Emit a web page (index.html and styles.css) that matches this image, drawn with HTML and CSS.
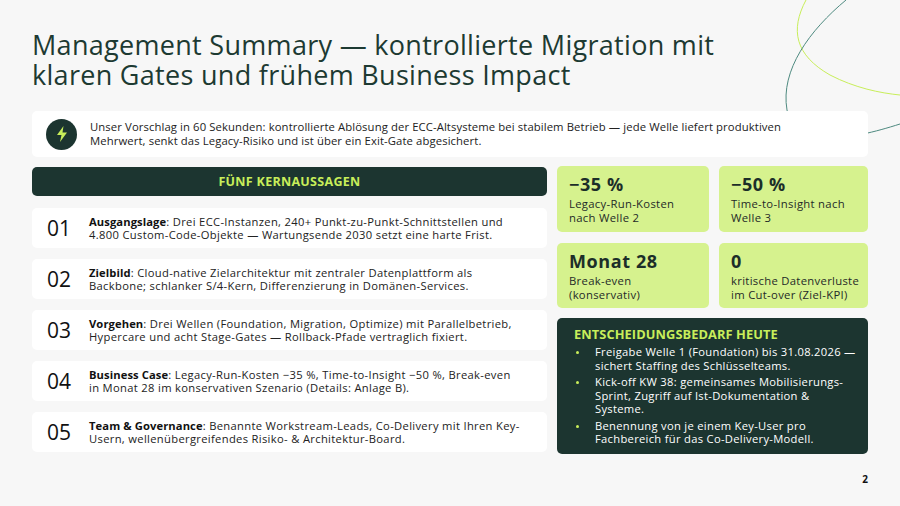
FILE: index.html
```html
<!DOCTYPE html>
<html lang="de">
<head>
<meta charset="utf-8">
<title>Management Summary</title>
<link rel="stylesheet" href="styles.css">
</head>
<body>
<div class="slide">
  <svg class="deco" width="900" height="506" viewBox="0 0 900 506">
    <path d="M806 0 C 790 30, 795 55, 830 75 C 855 88, 880 93, 900 95" fill="none" stroke="#c8ee5a" stroke-width="1"/>
    <path d="M846 0 C 810 30, 780 70, 787 110 C 795 150, 850 140, 900 124" fill="none" stroke="#4e8a80" stroke-width="1"/>
  </svg>
  <h1 class="title">Management Summary — kontrollierte Migration mit klaren Gates und frühem Business Impact</h1>
  <div class="intro">
    <div class="bolt">
      <svg width="14" height="16" viewBox="0 0 14 16"><path d="M8.5 0 L2 9 H6.5 L5 16 L12 6.5 H7.5 Z" fill="#c8ee5a"/></svg>
    </div>
    <p>Unser Vorschlag in 60 Sekunden: kontrollierte Ablösung der ECC-Altsysteme bei stabilem Betrieb — jede Welle liefert produktiven<br>Mehrwert, senkt das Legacy-Risiko und ist über ein Exit-Gate abgesichert.</p>
  </div>
  <div class="main">
    <div class="left">
      <div class="bar">FÜNF KERNAUSSAGEN</div>
      <div class="row"><span class="num">01</span><p><b>Ausgangslage</b>: Drei ECC-Instanzen, 240+ Punkt-zu-Punkt-Schnittstellen und<br>4.800 Custom-Code-Objekte — Wartungsende 2030 setzt eine harte Frist.</p></div>
      <div class="row"><span class="num">02</span><p><b>Zielbild</b>: Cloud-native Zielarchitektur mit zentraler Datenplattform als<br>Backbone; schlanker S/4-Kern, Differenzierung in Domänen-Services.</p></div>
      <div class="row"><span class="num">03</span><p><b>Vorgehen</b>: Drei Wellen (Foundation, Migration, Optimize) mit Parallelbetrieb,<br>Hypercare und acht Stage-Gates — Rollback-Pfade vertraglich fixiert.</p></div>
      <div class="row"><span class="num">04</span><p><b>Business Case</b>: Legacy-Run-Kosten −35 %, Time-to-Insight −50 %, Break-even<br>in Monat 28 im konservativen Szenario (Details: Anlage B).</p></div>
      <div class="row"><span class="num">05</span><p><b>Team &amp; Governance</b>: Benannte Workstream-Leads, Co-Delivery mit Ihren Key-<br>Usern, wellenübergreifendes Risiko- &amp; Architektur-Board.</p></div>
    </div>
    <div class="right">
      <div class="kpis">
        <div class="kpi"><div class="val">−35 %</div><div class="lbl">Legacy-Run-Kosten<br>nach Welle 2</div></div>
        <div class="kpi"><div class="val">−50 %</div><div class="lbl">Time-to-Insight nach<br>Welle 3</div></div>
        <div class="kpi"><div class="val">Monat 28</div><div class="lbl">Break-even<br>(konservativ)</div></div>
        <div class="kpi"><div class="val">0</div><div class="lbl">kritische Datenverluste<br>im Cut-over (Ziel-KPI)</div></div>
      </div>
      <div class="decision">
        <h2>ENTSCHEIDUNGSBEDARF HEUTE</h2>
        <ul>
          <li>Freigabe Welle 1 (Foundation) bis 31.08.2026 —<br>sichert Staffing des Schlüsselteams.</li>
          <li>Kick-off KW 38: gemeinsames Mobilisierungs-<br>Sprint, Zugriff auf Ist-Dokumentation &amp;<br>Systeme.</li>
          <li>Benennung von je einem Key-User pro<br>Fachbereich für das Co-Delivery-Modell.</li>
        </ul>
      </div>
    </div>
  </div>
  <div class="pagenum">2</div>
</div>
</body>
</html>
```

FILE: styles.css
```css
* { box-sizing: border-box; }
html, body { margin: 0; padding: 0; }
body {
  background: #f7f7f7;
  font-family: "Open Sans", "Noto Sans", sans-serif;
  color: #1f2a28;
}
.slide {
  position: relative;
  width: 900px;
  height: 506px;
  padding: 30px 32px 0 32px;
  overflow: hidden;
}
.deco { position: absolute; left: 0; top: 0; z-index: 0; }
.title {
  position: relative;
  margin: 0;
  max-width: 740px;
  font-weight: 400;
  font-size: 27px;
  line-height: 30px;
  color: #1d3a32;
  letter-spacing: 0.3px;
}
.intro {
  position: relative;
  z-index: 1;
  margin-top: 21px;
  height: 46px;
  background: #ffffff;
  border-radius: 5px;
  display: flex;
  align-items: center;
  padding: 0 14px;
  gap: 13px;
}
.bolt {
  width: 31px; height: 31px;
  border-radius: 50%;
  background: #1c3530;
  display: flex; align-items: center; justify-content: center;
  flex: none;
}
.intro p { margin: 0; font-size: 11.3px; line-height: 14px; color: #222; letter-spacing: 0.1px; white-space: nowrap; }
.main {
  display: flex;
  gap: 10px;
  margin-top: 10px;
}
.left { width: 515px; display: flex; flex-direction: column; gap: 11px; }
.bar {
  height: 29px;
  background: #1c3530;
  border-radius: 5px;
  color: #c8ee5a;
  font-weight: 700;
  font-size: 12.5px;
  display: flex; align-items: center; justify-content: center;
  letter-spacing: 0.3px;
  margin-bottom: 1px;
}
.row {
  height: 40px;
  background: #fff;
  border-radius: 5px;
  display: flex;
  align-items: center;
  padding: 0 10px 0 15px;
}
.num { width: 42px; font-size: 21px; color: #111; flex: none; }
.row p { margin: 0; font-size: 11.2px; line-height: 13.5px; color: #222; letter-spacing: 0.33px; white-space: nowrap; }
.row b { color: #111; letter-spacing: 0.1px; }
.right { width: 311px; display: flex; flex-direction: column; gap: 10px; margin-top: -1px; }
.kpis { display: grid; grid-template-columns: 152px 149px; grid-template-rows: 66px 65px; gap: 11px 10px; }
.kpi {
  background: #d6f28e;
  border-radius: 5px;
  padding: 7px 12px 0 12px;
}
.kpi .val { font-weight: 700; font-size: 18px; line-height: 22px; color: #1c2e29; letter-spacing: 0.6px; }
.kpi .lbl { font-size: 11.3px; line-height: 14px; color: #1f2a28; margin-top: 2px; letter-spacing: 0.3px; white-space: nowrap; }
.decision {
  height: 136px;
  background: #1c3530;
  border-radius: 5px;
  padding: 8px 14px 0 17px;
  color: #fff;
}
.decision h2 { margin: 0; font-size: 12.8px; font-weight: 700; color: #c8ee5a; line-height: 16px; letter-spacing: 0.1px; }
.decision ul { margin: 0; padding: 0; list-style: none; }
.decision li {
  position: relative;
  padding-left: 21px;
  font-size: 11.2px;
  line-height: 13.5px;
  margin-top: 3px;
  letter-spacing: 0.3px;
  white-space: nowrap;
}
.decision li::before {
  content: "";
  position: absolute;
  left: 2px; top: 6px;
  width: 3px; height: 3px;
  border-radius: 50%;
  background: #c8ee5a;
}
.pagenum {
  position: absolute;
  right: 32px;
  top: 472px;
  font-size: 10px;
  font-weight: 700;
  color: #111;
}
```
